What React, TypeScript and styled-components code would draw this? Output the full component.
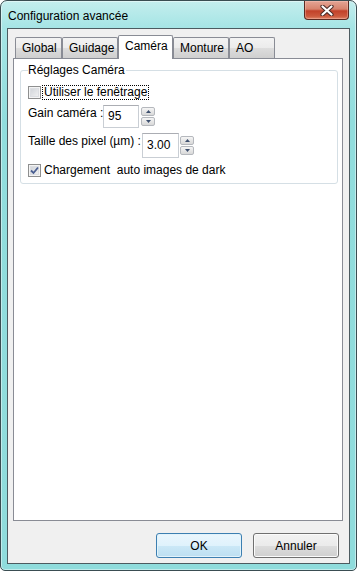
import React from "react";
import styled, { createGlobalStyle, css } from "styled-components";

const GlobalStyle = createGlobalStyle`
  html, body {
    margin: 0;
    padding: 0;
    background: #ffffff;
  }
  body {
    font-family: "Liberation Sans", Arial, sans-serif;
    font-size: 12px;
    color: #000;
  }
`;

/**
 *  Window frame
 */

const Window = styled.div`
  box-sizing: border-box;
  width: 357px;
  height: 571px;
  display: flex;
  flex-direction: column;
  padding: 0 6px 6px 6px;
  border: 1px solid #3a4d52;
  border-radius: 7px 7px 5px 5px;
  background: linear-gradient(#c4eeee 0px, #a6e5e5 26px, #91dddd 120px, #8fdcdc 100%);
  box-shadow: inset 0 0 0 1px rgba(255, 255, 255, 0.45);
`;

const TitleBar = styled.div`
  height: 27px;
  display: flex;
  justify-content: space-between;
  align-items: flex-start;
  padding: 0 1px 0 1px;
`;

const Title = styled.span`
  padding-top: 8px;
  line-height: 14px;
  font-size: 12px;
  color: #000;
`;

const CloseButton = styled.div`
  box-sizing: border-box;
  width: 45px;
  height: 19px;
  display: flex;
  align-items: center;
  justify-content: center;
  border: 1px solid #5a2a22;
  border-top: none;
  border-radius: 0 0 4px 4px;
  background: linear-gradient(#e4a595 0%, #d7836d 45%, #c2412a 55%, #cc5a3e 85%, #e0866a 100%);
  box-shadow: inset 0 0 0 1px rgba(255, 210, 200, 0.35);
`;

const Client = styled.div`
  flex: 1;
  display: flex;
  flex-direction: column;
  border: 1px solid #4c5b60;
  background: #f0f0f0;
  padding: 6px 6px 0 5px;
`;

/**
 *  Tabs
 */

const TabRow = styled.div`
  height: 23px;
  display: flex;
  align-items: flex-end;
  padding-left: 2px;
`;

const Tab = styled.div<{ w: number; active?: boolean }>`
  box-sizing: border-box;
  width: ${p => p.w}px;
  height: 21px;
  padding: 3px 0 0 6px;
  border: 1px solid #898c95;
  border-bottom: none;
  border-radius: 2px 2px 0 0;
  background: linear-gradient(#f3f3f3, #ebebeb 50%, #dddddd 51%, #cfcfcf);
  line-height: 14px;
  white-space: nowrap;
  ${p =>
    p.active &&
    css`
      height: 24px;
      margin-bottom: -1px;
      padding-top: 3px;
      background: #ffffff;
      position: relative;
      z-index: 1;
    `}
`;

const Panel = styled.div`
  height: 463px;
  box-sizing: border-box;
  border: 1px solid #898c95;
  background: #ffffff;
  padding-top: 4px;
`;

/**
 *  Group box
 */

const Group = styled.fieldset`
  margin: 0 4px 0 6px;
  padding: 8px 0 5px 7px;
  border: 1px solid #d5dfe5;
  border-radius: 3px;
  display: flex;
  flex-direction: column;
  gap: 5px;
`;

const Legend = styled.legend`
  padding: 0 1px 0 0;
  line-height: 14px;
  font-size: 12px;
`;

const Row = styled.div<{ h: number }>`
  display: flex;
  align-items: flex-start;
  height: ${p => p.h}px;
`;

const CheckBox = styled.span`
  box-sizing: border-box;
  width: 13px;
  height: 13px;
  margin-top: 1px;
  border: 1px solid #8e8f8f;
  background: linear-gradient(135deg, #cbcfd5, #f6f6f6);
  box-shadow: inset 0 0 0 1px #f4f4f4, inset 0 0 0 2px #dcdee2;
  display: flex;
  align-items: center;
  justify-content: center;
`;

const CheckLabel = styled.span<{ focused?: boolean }>`
  margin-left: 1px;
  padding: 0 1px;
  line-height: 13px;
  white-space: pre;
  border: 1px dotted ${p => (p.focused ? "#000" : "transparent")};
`;

const FieldLabel = styled.span<{ w: number }>`
  width: ${p => p.w}px;
  padding-top: 1px;
  line-height: 15px;
  white-space: nowrap;
`;

const SpinInput = styled.div<{ w: number; h: number }>`
  box-sizing: border-box;
  width: ${p => p.w}px;
  height: ${p => p.h}px;
  padding: 3px 0 0 4px;
  line-height: 15px;
  border: 1px solid #c9ced4;
  border-top-color: #abadb3;
  background: #ffffff;
  ${p =>
    p.h > 23 &&
    css`
      padding-top: 4px;
    `}
`;

const Spinner = styled.div<{ top: number; gap: number }>`
  display: flex;
  flex-direction: column;
  gap: 1px;
  margin-top: ${p => p.top}px;
  margin-left: ${p => p.gap}px;
`;

const SpinButton = styled.div`
  box-sizing: border-box;
  width: 14px;
  height: 9px;
  border: 1px solid #b5b8bd;
  border-radius: 2px;
  background: linear-gradient(#f6f6f6, #e6e6e6 50%, #d9d9d9);
  display: flex;
  align-items: center;
  justify-content: center;
`;

/**
 *  Bottom buttons
 */

const ButtonBar = styled.div`
  flex: 1;
  display: flex;
  justify-content: flex-end;
  gap: 11px;
  padding: 12px 4px 0 0;
`;

const Button = styled.div<{ primary?: boolean }>`
  box-sizing: border-box;
  width: 86px;
  height: 25px;
  display: flex;
  align-items: center;
  justify-content: center;
  border: 1px solid #707070;
  border-radius: 3px;
  background: linear-gradient(#f2f2f2, #ebebeb 50%, #dddddd 51%, #cfcfcf);
  box-shadow: inset 0 0 0 1px #fbfbfb;
  ${p =>
    p.primary &&
    css`
      border-color: #3c7fb1;
      background: linear-gradient(#eaf6fd, #dff2fc 50%, #cbe8f7 51%, #bcdff1);
      box-shadow: inset 0 0 0 1px #e2f3fb;
    `}
`;

const CloseGlyph = () => (
  <svg width="14" height="11" viewBox="0 0 14 11">
    <path d="M2.5 1.5 L11.5 9.5 M11.5 1.5 L2.5 9.5" stroke="#4a2a26" strokeWidth="4.2" strokeLinecap="round" fill="none" />
    <path d="M2.5 1.5 L11.5 9.5 M11.5 1.5 L2.5 9.5" stroke="#ffffff" strokeWidth="2.2" strokeLinecap="round" fill="none" />
  </svg>
);

const Tick = () => (
  <svg width="9" height="9" viewBox="0 0 9 9">
    <path d="M1 4.5 L3.5 7 L8 1.5" stroke="#4a5f92" strokeWidth="1.8" fill="none" />
  </svg>
);

const Arrow = ({ up }: { up?: boolean }) => (
  <svg width="5" height="3" viewBox="0 0 5 3">
    <path d={up ? "M0 3 L2.5 0 L5 3 Z" : "M0 0 L5 0 L2.5 3 Z"} fill="#3d4f6e" />
  </svg>
);

const Spin = ({ top, gap }: { top: number; gap: number }) => (
  <Spinner top={top} gap={gap}>
    <SpinButton>
      <Arrow up />
    </SpinButton>
    <SpinButton>
      <Arrow />
    </SpinButton>
  </Spinner>
);

const tabs = [
  { label: "Global", w: 47 },
  { label: "Guidage", w: 56 },
  { label: "Caméra", w: 55, active: true },
  { label: "Monture", w: 56 },
  { label: "AO", w: 46 }
];

const App: React.FC = () => {
  return (
    <>
      <GlobalStyle />
      <Window>
        <TitleBar>
          <Title>Configuration avancée</Title>
          <CloseButton>
            <CloseGlyph />
          </CloseButton>
        </TitleBar>
        <Client>
          <TabRow>
            {tabs.map(t => (
              <Tab key={t.label} w={t.w} active={t.active}>
                {t.label}
              </Tab>
            ))}
          </TabRow>
          <Panel>
            <Group>
              <Legend>Réglages Caméra</Legend>
              <Row h={15}>
                <CheckBox />
                <CheckLabel focused>Utiliser le fenêtrage</CheckLabel>
              </Row>
              <Row h={23}>
                <FieldLabel w={75}>Gain caméra :</FieldLabel>
                <SpinInput w={36} h={23}>95</SpinInput>
                <Spin top={2} gap={2} />
              </Row>
              <Row h={25}>
                <FieldLabel w={114}>Taille des pixel (µm) :</FieldLabel>
                <SpinInput w={37} h={25}>3.00</SpinInput>
                <Spin top={3} gap={1} />
              </Row>
              <Row h={15}>
                <CheckBox>
                  <Tick />
                </CheckBox>
                <CheckLabel>Chargement  auto images de dark</CheckLabel>
              </Row>
            </Group>
          </Panel>
          <ButtonBar>
            <Button primary>OK</Button>
            <Button>Annuler</Button>
          </ButtonBar>
        </Client>
      </Window>
    </>
  );
};

export default App;
